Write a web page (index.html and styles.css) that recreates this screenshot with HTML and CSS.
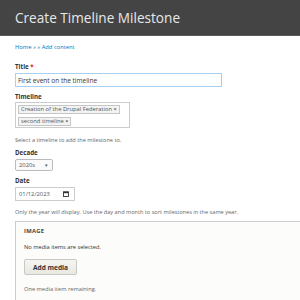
FILE: index.html
```html
<!DOCTYPE html>
<html lang="en">
<head>
<meta charset="UTF-8">
<title>Create Timeline Milestone</title>
<link rel="stylesheet" href="styles.css">
</head>
<body>
    <div class="header">Create Timeline Milestone</div>

    <div class="page">
        <div class="breadcrumb"><a href="#">Home</a> » » <a href="#">Add content</a></div>

        <div class="label">Title <span class="req">*</span></div>
        <input class="text-input" type="text" value="First event on the timeline">

        <div class="label gap">Timeline</div>
        <div class="tags">
            <span class="tag">Creation of the Drupal Federation <b>×</b></span>
            <span class="tag">second timeline <b>×</b></span>
        </div>
        <div class="desc first">Select a timeline to add the milestone to.</div>

        <div class="label small-gap">Decade</div>
        <div class="select">2020s <span class="arrow">▾</span></div>

        <div class="label gap">Date</div>
        <div class="date">
            01/12/2023
            <svg width="6" height="6" viewBox="0 0 6 6">
                <rect x="0.5" y="0.8" width="5" height="4.7" fill="none" stroke="#333" stroke-width="0.9"/>
                <rect x="0.5" y="0.8" width="5" height="1.4" fill="#333"/>
            </svg>
        </div>
        <div class="desc">Only the year will display. Use the day and month to sort milestones in the same year.</div>

        <div class="fieldset">
            <div class="legend">IMAGE</div>
            <div class="note">No media items are selected.</div>
            <div class="button">Add media</div>
            <div class="note last">One media item remaining.</div>
        </div>
    </div>
</body>
</html>
```

FILE: styles.css
```css
body {
    margin: 0;
    background: white;
    font-family: "Open Sans", sans-serif;
    color: #333;
}

.header {
    height: 36px;
    box-sizing: border-box;
    display: flex;
    align-items: center;
    padding-left: 15px;
    background: #444;
    border-bottom: 1px solid #5a5a5a;
    color: #e8e8e8;
    font-size: 13.6px;
}

.page {
    padding-left: 15px;
}

.breadcrumb {
    margin-top: 6px;
    line-height: 10px;
    font-size: 5.8px;
    color: #0074bd;
}

.breadcrumb a {
    color: #0074bd;
    text-decoration: none;
}

.label {
    margin-top: 10px;
    line-height: 10px;
    font-size: 6.2px;
    font-weight: bold;
    color: #333;
}

.label.gap {
    margin-top: 5px;
}

.label.small-gap {
    margin-top: 3px;
}

.req {
    color: #e62600;
}

.text-input {
    display: block;
    margin: 1px 0 0 0;
    width: 207px;
    height: 14px;
    box-sizing: border-box;
    padding: 0 2px;
    border: 1.5px solid #a8d0f0;
    font-family: "Open Sans", sans-serif;
    font-size: 6.5px;
    color: #333;
    outline: none;
}

.tags {
    width: 115px;
    height: 26px;
    box-sizing: border-box;
    border: 1px solid #ccc;
    padding: 2px 2px;
    display: flex;
    flex-direction: column;
    align-items: flex-start;
    gap: 3px;
}

.tag {
    height: 9px;
    box-sizing: border-box;
    line-height: 7px;
    padding: 0 2px;
    border: 1px solid #c6c6c6;
    background: #f3f3f3;
    font-size: 5.8px;
    color: #555;
}

.tag b {
    font-size: 5.5px;
}

.desc {
    margin-top: 6px;
    line-height: 10px;
    font-size: 5.6px;
    color: #666;
}

.desc.first {
    margin-top: 7px;
}

.select {
    margin-top: 1px;
    width: 38px;
    height: 12px;
    box-sizing: border-box;
    display: flex;
    align-items: center;
    justify-content: space-between;
    padding: 0 4px 0 3px;
    border: 1px solid #bbb;
    border-radius: 2px;
    background: #fafafa;
    font-size: 5.8px;
    color: #555;
}

.arrow {
    font-size: 4.5px;
}

.date {
    margin-top: 1px;
    width: 60px;
    height: 14px;
    box-sizing: border-box;
    display: flex;
    align-items: center;
    justify-content: space-between;
    padding: 0 5px 0 3px;
    border: 1px solid #ccc;
    font-size: 5.8px;
    color: #555;
}

.fieldset {
    margin-top: 4px;
    height: 82px;
    box-sizing: border-box;
    border: 1px solid #ccc;
    border-right: none;
    background: #fcfcfa;
    padding: 4px 8px 0 8px;
}

.legend {
    line-height: 10px;
    font-size: 5.8px;
    font-weight: bold;
    letter-spacing: 0.3px;
    color: #444;
}

.note {
    margin-top: 6px;
    line-height: 10px;
    font-size: 5.7px;
    color: #333;
}

.note.last {
    margin-top: 9px;
    color: #666;
}

.button {
    margin-top: 7px;
    width: 53px;
    height: 16px;
    box-sizing: border-box;
    display: flex;
    align-items: center;
    justify-content: center;
    border: 1px solid #c8c8c8;
    border-radius: 2px;
    background: linear-gradient(#f6f5f0, #e8e7e0);
    font-size: 6.6px;
    font-weight: bold;
    color: #333;
}
```
